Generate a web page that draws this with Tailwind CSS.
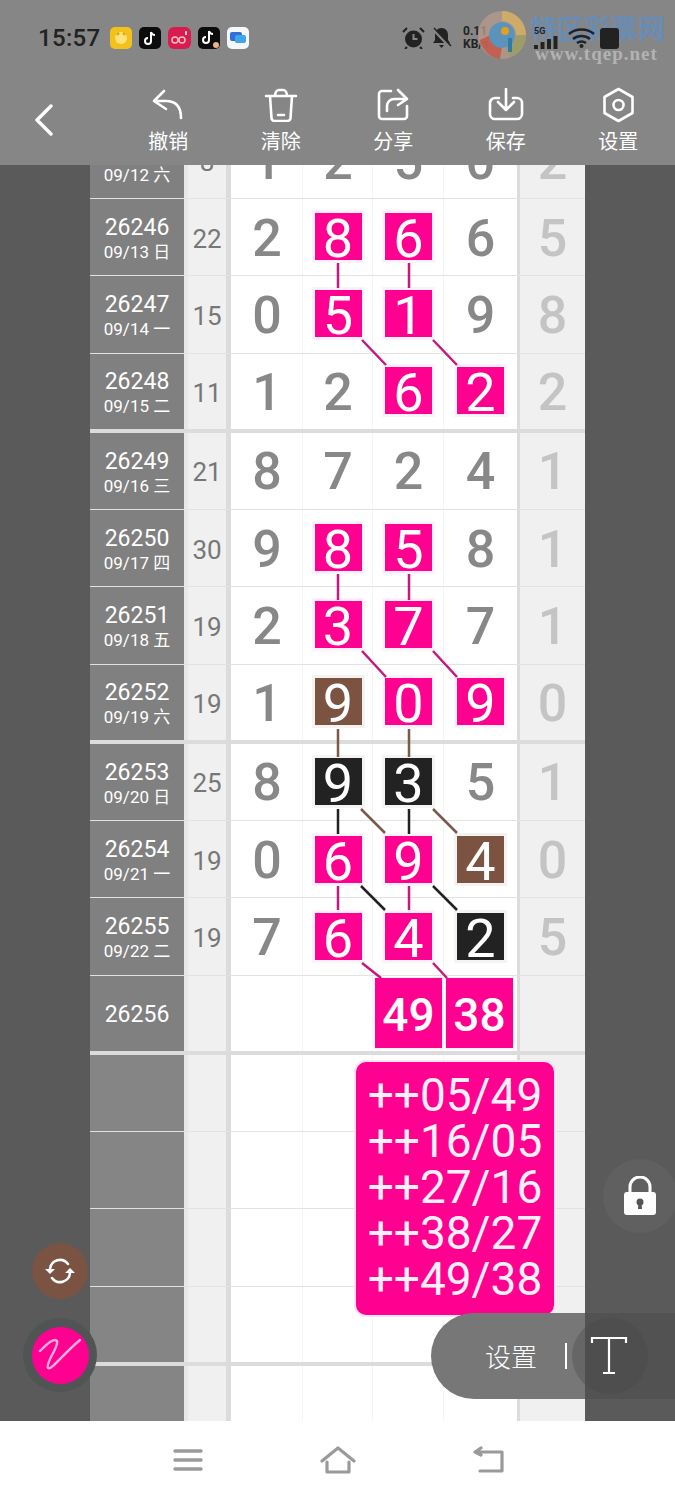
<!DOCTYPE html>
<html lang="zh">
<head>
<meta charset="utf-8">
<script src="https://cdn.jsdelivr.net/npm/@tailwindcss/browser@4"></script>
<title>Chart</title>
</head>
<body class="font-['Roboto','Noto_Sans_CJK_SC',sans-serif]">
<div class="relative w-[675px] h-[1500px] overflow-hidden bg-white flex flex-col">

  <!-- header -->
  <header class="h-[165px] bg-[#868686] shrink-0 flex flex-col">
    <div class="h-[76px] flex items-center pl-[38px]">
      <span class="text-[24px] leading-none font-medium text-[#222] tracking-[0.3px] w-[72px]">15:57</span>
      <div class="flex items-center gap-[7px] -mt-[1px]">
        <svg width="22" height="22" viewBox="0 0 22 22"><rect width="22" height="22" rx="5" fill="#f2c21a"/><circle cx="11" cy="11" r="6" fill="#ffe27a"/><path d="M7 8l2-2M15 8l-2-2" stroke="#d9a50f" stroke-width="2"/></svg>
        <svg width="22" height="22" viewBox="0 0 22 22"><rect width="22" height="22" rx="5" fill="#0c0c0c"/><path d="M12 5v9a3 3 0 1 1-3-3M12 5c.5 2 2 3 4 3" fill="none" stroke="#fff" stroke-width="2"/></svg>
        <svg width="23" height="22" viewBox="0 0 23 22"><rect width="23" height="22" rx="6" fill="#d81c50"/><circle cx="7" cy="13" r="3" fill="none" stroke="#fbb" stroke-width="1.5"/><circle cx="14" cy="13" r="3" fill="none" stroke="#fbb" stroke-width="1.5"/><path d="M18 4v4" stroke="#fff" stroke-width="1.5"/></svg>
        <svg width="22" height="22" viewBox="0 0 22 22"><rect width="22" height="22" rx="5" fill="#0c0c0c"/><path d="M11 4v9a3 3 0 1 1-3-3M11 4c.5 2 2 3 4 3" fill="none" stroke="#fff" stroke-width="2"/><circle cx="18" cy="18" r="3" fill="#e8b48c"/></svg>
        <svg width="22" height="22" viewBox="0 0 22 22"><rect width="22" height="22" rx="5" fill="#f4f8fb"/><rect x="3" y="5" width="12" height="9" rx="2" fill="#2f6fd8"/><rect x="8" y="8" width="11" height="8" rx="2" fill="#3fa4e8"/></svg>
      </div>
      <div class="ml-[153px] flex items-center text-[#222]">
        <svg width="23" height="22" viewBox="0 0 23 22"><circle cx="11.5" cy="12" r="8.5" fill="#222"/><path d="M11.5 7v5h4" stroke="#868686" stroke-width="2" fill="none"/><path d="M1 5l4-4M22 5l-4-4M5 20l-2 2M18 20l2 2" stroke="#222" stroke-width="2"/></svg>
        <svg class="ml-[6px]" width="21" height="22" viewBox="0 0 21 22"><path d="M10.500 1c4 0 6.500 3 6.500 7v5l2 3H2l2-3V8c0-4 2.500-7 6.500-7zM8 18h5l-2.500 3z" fill="#222"/><path d="M2 2l17 18" stroke="#868686" stroke-width="3"/><path d="M3 1l17 18" stroke="#222" stroke-width="1.500"/></svg>
        <div class="ml-[11px] w-[30px] text-[12px] leading-[13px] font-bold">0.11<br>KB/s</div>
      </div>
      <div class="relative z-10 ml-[41px] flex items-center text-[#222]">
        <div class="w-[26px] flex flex-col items-start">
          <span class="text-[9px] leading-[9px] font-bold">5G</span>
          <svg width="24" height="13" viewBox="0 0 24 13"><path d="M2 9v4M8.500 6v7M15 3v10M21.500 0v13" stroke="#222" stroke-width="4"/></svg>
        </div>
        <svg class="ml-[8px]" width="27" height="20" viewBox="0 0 27 20"><path d="M1 6c7-6 18-6 25 0M5 11c5-4 12-4 17 0M9 15c3-2 6-2 9 0" fill="none" stroke="#222" stroke-width="2.500"/><circle cx="13.500" cy="18" r="2" fill="#222"/></svg>
        <svg class="ml-[5px]" width="19" height="21" viewBox="0 0 19 21"><rect x="0" y="0" width="19" height="21" rx="3" fill="#222"/></svg>
      </div>
    </div>
    <nav class="flex-1 flex text-white text-[20px]">
      <a class="w-[112px] pl-[34px] pt-[28px] block">
        <svg width="20" height="32" viewBox="0 0 20 32" fill="none" stroke="#fff" stroke-width="3.4" stroke-linecap="round" stroke-linejoin="round"><path d="M17 2L3 16l14 14"/></svg>
      </a>
      <a class="w-[112.5px] flex flex-col items-center pt-[13px]">
        <svg width="32" height="32" viewBox="0 0 32 32" fill="none" stroke="#fff" stroke-width="2.6" stroke-linecap="round" stroke-linejoin="round" class="h-[32px]"><path d="M12 2L2 12l12 8M2 12h12c10 0 15 6 15 17"/></svg>
        <span class="leading-[26px] mt-[8px]">撤销</span>
      </a>
      <a class="w-[112.5px] flex flex-col items-center pt-[12px]">
        <svg width="34" height="34" viewBox="0 0 34 34" fill="none" stroke="#fff" stroke-width="2.6" stroke-linecap="round" stroke-linejoin="round"><path d="M2 8h30M11 8c0-4 2-6 4-6h4c2 0 4 2 4 6M6 8l1.5 22a3 3 0 0 0 3 3h13a3 3 0 0 0 3-3L28 8M14 27h6"/></svg>
        <span class="leading-[26px] mt-[7px]">清除</span>
      </a>
      <a class="w-[112.5px] flex flex-col items-center pt-[12px]">
        <svg width="34" height="33" viewBox="0 0 34 33" fill="none" stroke="#fff" stroke-width="2.6" stroke-linecap="round" stroke-linejoin="round"><path d="M15 3H6a3 3 0 0 0-3 3v22a3 3 0 0 0 3 3h22a3 3 0 0 0 3-3V18M11 23v-5a7 7 0 0 1 7-7h13M22 2l9 9-9 6"/></svg>
        <span class="leading-[26px] mt-[8px]">分享</span>
      </a>
      <a class="w-[112.5px] flex flex-col items-center pt-[12px]">
        <svg width="36" height="33" viewBox="0 0 36 33" fill="none" stroke="#fff" stroke-width="2.6" stroke-linecap="round" stroke-linejoin="round"><path d="M11 10H7a5 5 0 0 0-5 5v11a5 5 0 0 0 5 5h22a5 5 0 0 0 5-5V15a5 5 0 0 0-5-5h-4M18 1v21M10 14l8 8 8-8"/></svg>
        <span class="leading-[26px] mt-[8px]">保存</span>
      </a>
      <a class="w-[112.5px] flex flex-col items-center pt-[11px]">
        <svg width="33" height="36" viewBox="0 0 33 36" fill="none" stroke="#fff" stroke-width="2.6" stroke-linejoin="round"><path d="M16.5 2l14 8v16l-14 8-14-8V10z"/><circle cx="16.5" cy="18" r="5"/></svg>
        <span class="leading-[26px] mt-[6px]">设置</span>
      </a>
    </nav>
  </header>

  <!-- body -->
  <main class="flex-1 flex min-h-0">
    <aside class="w-[90px] bg-[#5a5a5a] shrink-0"></aside>

    <section class="relative isolate w-[495px] overflow-hidden bg-white">

      <!-- faint column rules behind the cells -->
      <div class="absolute left-[141px] top-0 h-full w-[285px] -z-10 grid grid-cols-[72px_70px_71px_72px] *:border-r *:border-[#f5f5f5]">
        <div></div><div></div><div></div><div class="border-r-0!"></div>
      </div>

      <!-- partial first row -->
      <div class="h-[34px] overflow-hidden flex flex-col justify-end">
        <div class="shrink-0 h-[77px] grid grid-cols-[94px_4px_38px_5px_72px_70px_71px_73px_3px_65px] border-b border-[#e2e2e2] text-[52px] leading-none font-medium text-[#888] *:flex *:items-center *:justify-center *:pt-[3px]">
          <div class="bg-[#808080] text-white font-normal flex-col!"><span class="text-[23px] leading-[27px]">26245</span><span class="text-[17px] leading-[22px]">09/12 六</span></div>
          <div class="bg-[#e8e8e8]"></div><div class="bg-[#f0f0f0] text-[26px] font-normal text-[#777]">8</div><div class="bg-[#dcdcdc]"></div>
          <div>1</div><div>2</div><div>5</div><div>0</div><div class="bg-[#dcdcdc]"></div><div class="bg-[#f0f0f0] text-[#c4c4c4]">2</div>
        </div>
      </div>

      <!-- group 1 -->
      <div class="h-[77.3px] grid grid-cols-[94px_4px_38px_5px_72px_70px_71px_73px_3px_65px] border-b border-[#e2e2e2] text-[52px] leading-none font-medium text-[#888] *:flex *:items-center *:justify-center *:pt-[3px]">
        <div class="bg-[#808080] text-white font-normal flex-col!"><span class="text-[23px] leading-[27px]">26246</span><span class="text-[17px] leading-[22px]">09/13 日</span></div>
        <div class="bg-[#e8e8e8]"></div><div class="bg-[#f0f0f0] text-[26px] font-normal text-[#777]">22</div><div class="bg-[#dcdcdc]"></div>
        <div>2</div>
        <div><span class="w-[47px] h-[47px] -mt-[4px] pt-[5px] flex items-center justify-center bg-[#ff0090] text-white text-[54px] font-normal ring-3 ring-[#fdf2f9]">8</span></div>
        <div><span class="w-[47px] h-[47px] -mt-[4px] pt-[5px] flex items-center justify-center bg-[#ff0090] text-white text-[54px] font-normal ring-3 ring-[#fdf2f9]">6</span></div>
        <div>6</div><div class="bg-[#dcdcdc]"></div><div class="bg-[#f0f0f0] text-[#c4c4c4]">5</div>
      </div>
      <div class="h-[77.3px] grid grid-cols-[94px_4px_38px_5px_72px_70px_71px_73px_3px_65px] border-b border-[#e2e2e2] text-[52px] leading-none font-medium text-[#888] *:flex *:items-center *:justify-center *:pt-[3px]">
        <div class="bg-[#808080] text-white font-normal flex-col!"><span class="text-[23px] leading-[27px]">26247</span><span class="text-[17px] leading-[22px]">09/14 一</span></div>
        <div class="bg-[#e8e8e8]"></div><div class="bg-[#f0f0f0] text-[26px] font-normal text-[#777]">15</div><div class="bg-[#dcdcdc]"></div>
        <div>0</div>
        <div><span class="w-[47px] h-[47px] -mt-[4px] pt-[5px] flex items-center justify-center bg-[#ff0090] text-white text-[54px] font-normal ring-3 ring-[#fdf2f9]">5</span></div>
        <div><span class="w-[47px] h-[47px] -mt-[4px] pt-[5px] flex items-center justify-center bg-[#ff0090] text-white text-[54px] font-normal ring-3 ring-[#fdf2f9]">1</span></div>
        <div>9</div><div class="bg-[#dcdcdc]"></div><div class="bg-[#f0f0f0] text-[#c4c4c4]">8</div>
      </div>
      <div class="h-[79.1px] grid grid-cols-[94px_4px_38px_5px_72px_70px_71px_73px_3px_65px] border-b-4 border-[#dcdcdc] text-[52px] leading-none font-medium text-[#888] *:flex *:items-center *:justify-center *:pt-[3px]">
        <div class="bg-[#808080] text-white font-normal flex-col!"><span class="text-[23px] leading-[27px]">26248</span><span class="text-[17px] leading-[22px]">09/15 二</span></div>
        <div class="bg-[#e8e8e8]"></div><div class="bg-[#f0f0f0] text-[26px] font-normal text-[#777]">11</div><div class="bg-[#dcdcdc]"></div>
        <div>1</div><div>2</div>
        <div><span class="w-[47px] h-[47px] -mt-[4px] pt-[5px] flex items-center justify-center bg-[#ff0090] text-white text-[54px] font-normal ring-3 ring-[#fdf2f9]">6</span></div>
        <div><span class="w-[47px] h-[47px] -mt-[4px] pt-[5px] flex items-center justify-center bg-[#ff0090] text-white text-[54px] font-normal ring-3 ring-[#fdf2f9]">2</span></div>
        <div class="bg-[#dcdcdc]"></div><div class="bg-[#f0f0f0] text-[#c4c4c4]">2</div>
      </div>

      <!-- group 2 -->
      <div class="h-[77.3px] grid grid-cols-[94px_4px_38px_5px_72px_70px_71px_73px_3px_65px] border-b border-[#e2e2e2] text-[52px] leading-none font-medium text-[#888] *:flex *:items-center *:justify-center *:pt-[3px]">
        <div class="bg-[#808080] text-white font-normal flex-col!"><span class="text-[23px] leading-[27px]">26249</span><span class="text-[17px] leading-[22px]">09/16 三</span></div>
        <div class="bg-[#e8e8e8]"></div><div class="bg-[#f0f0f0] text-[26px] font-normal text-[#777]">21</div><div class="bg-[#dcdcdc]"></div>
        <div>8</div><div>7</div><div>2</div><div>4</div><div class="bg-[#dcdcdc]"></div><div class="bg-[#f0f0f0] text-[#c4c4c4]">1</div>
      </div>
      <div class="h-[77.3px] grid grid-cols-[94px_4px_38px_5px_72px_70px_71px_73px_3px_65px] border-b border-[#e2e2e2] text-[52px] leading-none font-medium text-[#888] *:flex *:items-center *:justify-center *:pt-[3px]">
        <div class="bg-[#808080] text-white font-normal flex-col!"><span class="text-[23px] leading-[27px]">26250</span><span class="text-[17px] leading-[22px]">09/17 四</span></div>
        <div class="bg-[#e8e8e8]"></div><div class="bg-[#f0f0f0] text-[26px] font-normal text-[#777]">30</div><div class="bg-[#dcdcdc]"></div>
        <div>9</div>
        <div><span class="w-[47px] h-[47px] -mt-[4px] pt-[5px] flex items-center justify-center bg-[#ff0090] text-white text-[54px] font-normal ring-3 ring-[#fdf2f9]">8</span></div>
        <div><span class="w-[47px] h-[47px] -mt-[4px] pt-[5px] flex items-center justify-center bg-[#ff0090] text-white text-[54px] font-normal ring-3 ring-[#fdf2f9]">5</span></div>
        <div>8</div><div class="bg-[#dcdcdc]"></div><div class="bg-[#f0f0f0] text-[#c4c4c4]">1</div>
      </div>
      <div class="h-[77.3px] grid grid-cols-[94px_4px_38px_5px_72px_70px_71px_73px_3px_65px] border-b border-[#e2e2e2] text-[52px] leading-none font-medium text-[#888] *:flex *:items-center *:justify-center *:pt-[3px]">
        <div class="bg-[#808080] text-white font-normal flex-col!"><span class="text-[23px] leading-[27px]">26251</span><span class="text-[17px] leading-[22px]">09/18 五</span></div>
        <div class="bg-[#e8e8e8]"></div><div class="bg-[#f0f0f0] text-[26px] font-normal text-[#777]">19</div><div class="bg-[#dcdcdc]"></div>
        <div>2</div>
        <div><span class="w-[47px] h-[47px] -mt-[4px] pt-[5px] flex items-center justify-center bg-[#ff0090] text-white text-[54px] font-normal ring-3 ring-[#fdf2f9]">3</span></div>
        <div><span class="w-[47px] h-[47px] -mt-[4px] pt-[5px] flex items-center justify-center bg-[#ff0090] text-white text-[54px] font-normal ring-3 ring-[#fdf2f9]">7</span></div>
        <div>7</div><div class="bg-[#dcdcdc]"></div><div class="bg-[#f0f0f0] text-[#c4c4c4]">1</div>
      </div>
      <div class="h-[79.1px] grid grid-cols-[94px_4px_38px_5px_72px_70px_71px_73px_3px_65px] border-b-4 border-[#dcdcdc] text-[52px] leading-none font-medium text-[#888] *:flex *:items-center *:justify-center *:pt-[3px]">
        <div class="bg-[#808080] text-white font-normal flex-col!"><span class="text-[23px] leading-[27px]">26252</span><span class="text-[17px] leading-[22px]">09/19 六</span></div>
        <div class="bg-[#e8e8e8]"></div><div class="bg-[#f0f0f0] text-[26px] font-normal text-[#777]">19</div><div class="bg-[#dcdcdc]"></div>
        <div>1</div>
        <div><span class="w-[47px] h-[47px] -mt-[4px] pt-[5px] flex items-center justify-center bg-[#7c5340] text-white text-[54px] font-normal ring-3 ring-[#f5f2f0]">9</span></div>
        <div><span class="w-[47px] h-[47px] -mt-[4px] pt-[5px] flex items-center justify-center bg-[#ff0090] text-white text-[54px] font-normal ring-3 ring-[#fdf2f9]">0</span></div>
        <div><span class="w-[47px] h-[47px] -mt-[4px] pt-[5px] flex items-center justify-center bg-[#ff0090] text-white text-[54px] font-normal ring-3 ring-[#fdf2f9]">9</span></div>
        <div class="bg-[#dcdcdc]"></div><div class="bg-[#f0f0f0] text-[#c4c4c4]">0</div>
      </div>

      <!-- group 3 -->
      <div class="h-[77.3px] grid grid-cols-[94px_4px_38px_5px_72px_70px_71px_73px_3px_65px] border-b border-[#e2e2e2] text-[52px] leading-none font-medium text-[#888] *:flex *:items-center *:justify-center *:pt-[3px]">
        <div class="bg-[#808080] text-white font-normal flex-col!"><span class="text-[23px] leading-[27px]">26253</span><span class="text-[17px] leading-[22px]">09/20 日</span></div>
        <div class="bg-[#e8e8e8]"></div><div class="bg-[#f0f0f0] text-[26px] font-normal text-[#777]">25</div><div class="bg-[#dcdcdc]"></div>
        <div>8</div>
        <div><span class="w-[47px] h-[47px] -mt-[3px] pt-[5px] flex items-center justify-center bg-[#222] text-white text-[54px] font-normal ring-3 ring-[#f4f4f4]">9</span></div>
        <div><span class="w-[47px] h-[47px] -mt-[3px] pt-[5px] flex items-center justify-center bg-[#222] text-white text-[54px] font-normal ring-3 ring-[#f4f4f4]">3</span></div>
        <div>5</div><div class="bg-[#dcdcdc]"></div><div class="bg-[#f0f0f0] text-[#c4c4c4]">1</div>
      </div>
      <div class="h-[77.3px] grid grid-cols-[94px_4px_38px_5px_72px_70px_71px_73px_3px_65px] border-b border-[#e2e2e2] text-[52px] leading-none font-medium text-[#888] *:flex *:items-center *:justify-center *:pt-[3px]">
        <div class="bg-[#808080] text-white font-normal flex-col!"><span class="text-[23px] leading-[27px]">26254</span><span class="text-[17px] leading-[22px]">09/21 一</span></div>
        <div class="bg-[#e8e8e8]"></div><div class="bg-[#f0f0f0] text-[26px] font-normal text-[#777]">19</div><div class="bg-[#dcdcdc]"></div>
        <div>0</div>
        <div><span class="w-[47px] h-[47px] -mt-[3px] pt-[5px] flex items-center justify-center bg-[#ff0090] text-white text-[54px] font-normal ring-3 ring-[#fdf2f9]">6</span></div>
        <div><span class="w-[47px] h-[47px] -mt-[3px] pt-[5px] flex items-center justify-center bg-[#ff0090] text-white text-[54px] font-normal ring-3 ring-[#fdf2f9]">9</span></div>
        <div><span class="w-[47px] h-[47px] -mt-[3px] pt-[5px] flex items-center justify-center bg-[#7c5340] text-white text-[54px] font-normal ring-3 ring-[#f5f2f0]">4</span></div>
        <div class="bg-[#dcdcdc]"></div><div class="bg-[#f0f0f0] text-[#c4c4c4]">0</div>
      </div>
      <div class="h-[77.3px] grid grid-cols-[94px_4px_38px_5px_72px_70px_71px_73px_3px_65px] border-b border-[#e2e2e2] text-[52px] leading-none font-medium text-[#888] *:flex *:items-center *:justify-center *:pt-[3px]">
        <div class="bg-[#808080] text-white font-normal flex-col!"><span class="text-[23px] leading-[27px]">26255</span><span class="text-[17px] leading-[22px]">09/22 二</span></div>
        <div class="bg-[#e8e8e8]"></div><div class="bg-[#f0f0f0] text-[26px] font-normal text-[#777]">19</div><div class="bg-[#dcdcdc]"></div>
        <div>7</div>
        <div><span class="w-[47px] h-[47px] -mt-[3px] pt-[5px] flex items-center justify-center bg-[#ff0090] text-white text-[54px] font-normal ring-3 ring-[#fdf2f9]">6</span></div>
        <div><span class="w-[47px] h-[47px] -mt-[3px] pt-[5px] flex items-center justify-center bg-[#ff0090] text-white text-[54px] font-normal ring-3 ring-[#fdf2f9]">4</span></div>
        <div><span class="w-[47px] h-[47px] -mt-[3px] pt-[5px] flex items-center justify-center bg-[#222] text-white text-[54px] font-normal ring-3 ring-[#f4f4f4]">2</span></div>
        <div class="bg-[#dcdcdc]"></div><div class="bg-[#f0f0f0] text-[#c4c4c4]">5</div>
      </div>
      <div class="h-[79.1px] grid grid-cols-[94px_4px_38px_5px_72px_70px_71px_73px_3px_65px] border-b-4 border-[#dcdcdc] text-[52px] leading-none text-[#888] *:flex *:items-center *:justify-center">
        <div class="bg-[#808080] text-white pt-[3px]"><span class="text-[23px]">26256</span></div>
        <div class="bg-[#e8e8e8]"></div><div class="bg-[#f0f0f0]"></div><div class="bg-[#dcdcdc]"></div>
        <div></div><div></div>
        <div><span class="w-[67px] h-[70px] flex items-center justify-center bg-[#ff0090] text-white text-[46px] font-medium pt-[4px] ring-1 ring-[#fdeef7]">49</span></div>
        <div><span class="w-[67px] h-[70px] -ml-[2px] flex items-center justify-center bg-[#ff0090] text-white text-[46px] font-medium pt-[4px] ring-1 ring-[#fdeef7]">38</span></div>
        <div class="bg-[#dcdcdc]"></div><div class="bg-[#f0f0f0]"></div>
      </div>

      <!-- empty rows -->
      <div class="h-[77.3px] grid grid-cols-[94px_4px_38px_5px_72px_70px_71px_73px_3px_65px] border-b border-[#e2e2e2]">
        <div class="bg-[#858585]"></div><div class="bg-[#e8e8e8]"></div><div class="bg-[#f0f0f0]"></div><div class="bg-[#dcdcdc]"></div><div></div><div></div><div></div><div></div><div class="bg-[#dcdcdc]"></div><div class="bg-[#f0f0f0]"></div>
      </div>
      <div class="h-[77.3px] grid grid-cols-[94px_4px_38px_5px_72px_70px_71px_73px_3px_65px] border-b border-[#e2e2e2]">
        <div class="bg-[#858585]"></div><div class="bg-[#e8e8e8]"></div><div class="bg-[#f0f0f0]"></div><div class="bg-[#dcdcdc]"></div><div></div><div></div><div></div><div></div><div class="bg-[#dcdcdc]"></div><div class="bg-[#f0f0f0]"></div>
      </div>
      <div class="h-[77.3px] grid grid-cols-[94px_4px_38px_5px_72px_70px_71px_73px_3px_65px] border-b border-[#e2e2e2]">
        <div class="bg-[#858585]"></div><div class="bg-[#e8e8e8]"></div><div class="bg-[#f0f0f0]"></div><div class="bg-[#dcdcdc]"></div><div></div><div></div><div></div><div></div><div class="bg-[#dcdcdc]"></div><div class="bg-[#f0f0f0]"></div>
      </div>
      <div class="h-[79.1px] grid grid-cols-[94px_4px_38px_5px_72px_70px_71px_73px_3px_65px] border-b-4 border-[#dcdcdc]">
        <div class="bg-[#858585]"></div><div class="bg-[#e8e8e8]"></div><div class="bg-[#f0f0f0]"></div><div class="bg-[#dcdcdc]"></div><div></div><div></div><div></div><div></div><div class="bg-[#dcdcdc]"></div><div class="bg-[#f0f0f0]"></div>
      </div>
      <div class="h-[60px] grid grid-cols-[94px_4px_38px_5px_72px_70px_71px_73px_3px_65px]">
        <div class="bg-[#858585]"></div><div class="bg-[#e8e8e8]"></div><div class="bg-[#f0f0f0]"></div><div class="bg-[#dcdcdc]"></div><div></div><div></div><div></div><div></div><div class="bg-[#dcdcdc]"></div><div class="bg-[#f0f0f0]"></div>
      </div>

      <!-- connectors -->
      <svg class="absolute left-0 top-0 pointer-events-none" width="495" height="1256" viewBox="90 165 495 1256" fill="none" stroke-width="2.5">
        <g stroke="#c4197f">
          <path d="M338 263V288M409 263V288M362 340L386 365M433 340L457 365"/>
          <path d="M338 574V600M409 574V600M362 651L386 677M433 651L457 677"/>
          <path d="M338 886V910M409 886V910M362 963L381 978M433 963L447 978"/>
        </g>
        <g stroke="#7c5a4a">
          <path d="M338 729V757M409 729V757M361 809L385 833M433 809L457 833"/>
        </g>
        <g stroke="#222">
          <path d="M338 809V834M409 809V834M361 886L385 910M433 886L457 910"/>
        </g>
      </svg>

      <!-- popup -->
      <div class="absolute left-[266px] top-[897px] w-[198px] h-[253px] rounded-[10px] bg-[#ff0090] text-[#fff0fa] text-[46px] leading-[46px] text-center pt-[10px] ring-2 ring-[#fde4f4]">
        <p>++05/49</p><p>++16/05</p><p>++27/16</p><p>++38/27</p><p>++49/38</p>
      </div>
    </section>

    <aside class="w-[90px] bg-[#5a5a5a] shrink-0"></aside>
  </main>

  <!-- bottom nav -->
  <footer class="h-[79px] shrink-0 bg-white flex items-center pb-[2px]">
    <div class="w-[338px] flex justify-end pr-[135px]">
      <svg width="30" height="24" viewBox="0 0 30 24" stroke="#9a9a9a" stroke-width="3.4" stroke-linecap="round"><path d="M2 3H28M2 12H28M2 21H28"/></svg>
    </div>
    <svg class="-ml-[18px]" width="36" height="28" viewBox="0 0 36 28" fill="none" stroke="#9a9a9a" stroke-width="3.2" stroke-linecap="round" stroke-linejoin="round"><path d="M2 15L18 2l16 13M7 16v10h22V16"/></svg>
    <svg class="ml-[117px]" width="32" height="28" viewBox="0 0 32 28" fill="none" stroke="#9a9a9a" stroke-width="3.2" stroke-linecap="round" stroke-linejoin="round"><path d="M8 2L2 6l6 3M2 6h27v19H7"/></svg>
  </footer>

  <!-- watermark -->
  <div class="absolute left-[475px] top-[7px] w-[200px] h-[58px] pointer-events-none">
    <svg class="absolute left-[3px] top-[3px]" width="48" height="50" viewBox="0 0 48 50">
      <circle cx="24" cy="25" r="24" fill="#b5998c" fill-opacity=".8"/>
      <path d="M24 1a24 24 0 0 1 24 24h-10a14 14 0 0 0-14-14z" fill="#d8b060" fill-opacity=".8"/>
      <path d="M2 30a24 24 0 0 0 20 19l2-12a14 14 0 0 1-12-12z" fill="#c8503f" fill-opacity=".75"/>
      <path d="M48 25a24 24 0 0 1-16 22l-4-10a14 14 0 0 0 10-12z" fill="#9aa060" fill-opacity=".85"/>
      <circle cx="24" cy="25" r="13" fill="#5c93bc"/>
      <circle cx="27" cy="21" r="4" fill="#e0a020"/>
      <path d="M30 28h4v14h-4z" fill="#2f7aa8"/>
    </svg>
    <span class="absolute left-[55px] top-[6px] text-[27px] leading-[30px] font-bold text-[#5f8fc4]/80 font-['Noto_Sans_CJK_SC',sans-serif] whitespace-nowrap">特区彩票网</span>
    <span class="absolute left-[60px] top-[37px] text-[19px] leading-[20px] font-bold text-[#b3b3b3] font-['Liberation_Serif',serif] tracking-[1px] whitespace-nowrap">www.tqep.net</span>
  </div>

  <!-- floating buttons -->
  <div class="absolute left-[32px] top-[1243px] w-[56px] h-[56px] rounded-full bg-[#7b5343] flex items-center justify-center">
    <svg width="32" height="30" viewBox="0 0 32 30" fill="none" stroke="#fff" stroke-width="2.6" stroke-linecap="round"><path d="M6 13a10 10 0 0 1 18-5M26 17a10 10 0 0 1-18 5"/><path d="M1 13h10l-5 5zM31 17H21l5-5z" fill="#fff" stroke="none"/></svg>
  </div>
  <div class="absolute left-[23px] top-[1318px] w-[74px] h-[74px] rounded-full bg-[#505454] flex items-center justify-center">
    <div class="w-[57px] h-[57px] rounded-full bg-[#ff0090] flex items-center justify-center">
      <svg width="46" height="36" viewBox="0 0 46 36" fill="none" stroke="#ffb0e0" stroke-width="2.4" stroke-linecap="round" stroke-linejoin="round"><path d="M3 14C9 8 17 0 20 4C22 10 8 26 11 31C14 34 25 18 43 3"/></svg>
    </div>
  </div>
  <div class="absolute left-[603px] top-[1159px] w-[74px] h-[74px] rounded-full bg-[#606060] flex items-center justify-center">
    <svg width="34" height="40" viewBox="0 0 34 40"><path d="M7 18V11a10 10 0 0 1 20 0v7" fill="none" stroke="#fff" stroke-width="3"/><path d="M4 16h26a3 3 0 0 1 3 3v17a3 3 0 0 1-3 3H4a3 3 0 0 1-3-3V19a3 3 0 0 1 3-3z" fill="#fff"/><circle cx="17" cy="26" r="3.5" fill="#555"/><path d="M15.5 27h3l.5 6h-4z" fill="#555"/></svg>
  </div>

  <!-- text settings pill -->
  <div class="absolute left-[431px] top-[1313px] w-[244px] h-[86px] flex">
    <div class="w-[154px] h-full bg-[#777] rounded-l-[43px] flex items-center justify-end pr-[18px] gap-[28px] text-white text-[26px]">
      <span class="leading-none font-['Noto_Sans_CJK_SC',sans-serif] font-light">设置</span>
      <span class="w-[2px] h-[26px] bg-white"></span>
    </div>
    <div class="w-[90px] h-full bg-[#525252]"></div>
    <div class="absolute left-[141px] top-[5px] w-[76px] h-[76px] rounded-full bg-[#666] [clip-path:inset(0_63px_0_0)]"></div>
    <div class="absolute left-[141px] top-[5px] w-[76px] h-[76px] rounded-full bg-[#4e4e4e] [clip-path:inset(0_0_0_13px)]"></div>
    <svg class="absolute left-[159px] top-[23px]" width="38" height="40" viewBox="0 0 38 40" fill="none" stroke="#fff" stroke-width="2.2"><path d="M2 7V2H36V7M19 2V37M13 37H25"/></svg>
  </div>
</div>
</body>
</html>
